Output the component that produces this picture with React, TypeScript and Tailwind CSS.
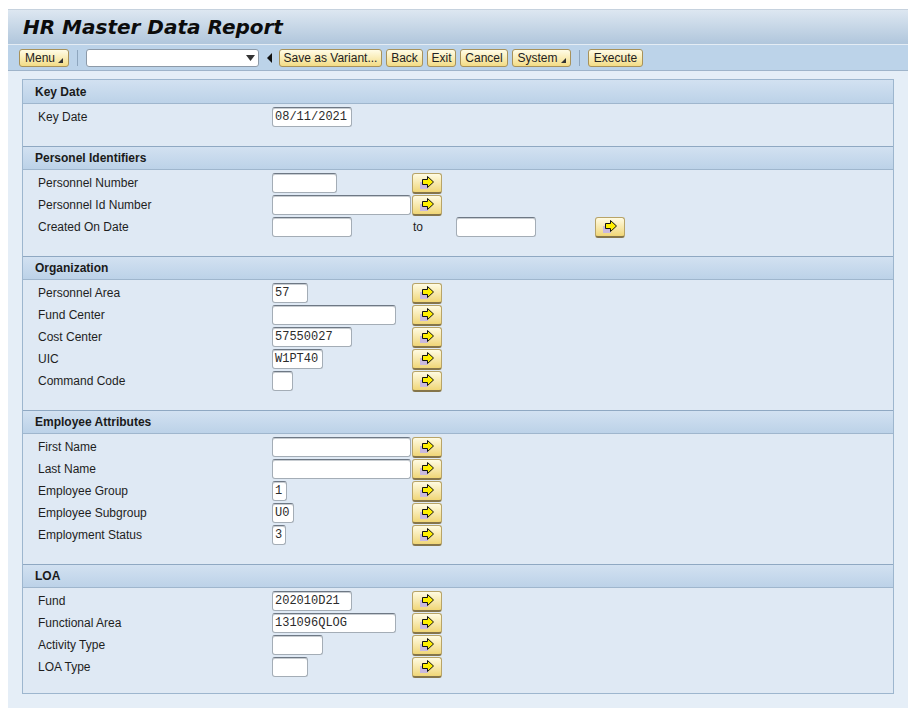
import React from "react";

type Field = {
  label: string;
  width: number;
  value?: string;
  range?: boolean;
};

type Section = {
  title: string;
  arrows: boolean;
  fields: Field[];
};

const sections: Section[] = [
  {
    title: "Key Date",
    arrows: false,
    fields: [{ label: "Key Date", width: 80, value: "08/11/2021" }],
  },
  {
    title: "Personel Identifiers",
    arrows: true,
    fields: [
      { label: "Personnel Number", width: 65 },
      { label: "Personnel Id Number", width: 139 },
      { label: "Created On Date", width: 80, range: true },
    ],
  },
  {
    title: "Organization",
    arrows: true,
    fields: [
      { label: "Personnel Area", width: 36, value: "57" },
      { label: "Fund Center", width: 124 },
      { label: "Cost Center", width: 80, value: "57550027" },
      { label: "UIC", width: 51, value: "W1PT40" },
      { label: "Command Code", width: 21 },
    ],
  },
  {
    title: "Employee Attributes",
    arrows: true,
    fields: [
      { label: "First Name", width: 139 },
      { label: "Last Name", width: 139 },
      { label: "Employee Group", width: 15, value: "1" },
      { label: "Employee Subgroup", width: 22, value: "U0" },
      { label: "Employment Status", width: 14, value: "3" },
    ],
  },
  {
    title: "LOA",
    arrows: true,
    fields: [
      { label: "Fund", width: 80, value: "202010D21" },
      { label: "Functional Area", width: 124, value: "131096QLOG" },
      { label: "Activity Type", width: 51 },
      { label: "LOA Type", width: 36 },
    ],
  },
];

function ArrowButton() {
  return (
    <div className="flex h-[21px] w-[30px] shrink-0 items-center justify-center rounded-[3px] border border-[#b8a468] border-b-[2px] border-b-[#85754a] bg-gradient-to-b from-[#fffbe2] to-[#f0d676]">
      <svg width="17" height="15" viewBox="0 0 17 15">
        <rect x="1" y="7" width="8" height="7" fill="#c9b9df" />
        <polygon
          points="3.5,4.5 8.5,4.5 8.5,1.5 14.5,7 8.5,12.5 8.5,9.5 3.5,9.5"
          fill="#ffef00"
          stroke="#111"
          strokeWidth="1"
          strokeLinejoin="miter"
        />
      </svg>
    </div>
  );
}

function TextInput({ width, value }: { width: number; value?: string }) {
  return (
    <div
      className="flex h-[20px] items-center rounded-[3px] border border-[#a4adb6] border-t-[#6e7884] bg-white pl-[2px] font-['Liberation_Mono',monospace] text-[12px] text-[#2b2b2b] shadow-[inset_0_1px_0_#c8cdd2]"
      style={{ width }}
    >
      {value}
    </div>
  );
}

function ToolButton({ label, width, menu }: { label: string; width: number; menu?: boolean }) {
  return (
    <div
      className="flex h-[18px] shrink-0 items-center justify-center gap-[3px] rounded-[3px] border border-[#a8925a] bg-gradient-to-b from-[#fffce6] to-[#f3dc84] text-[12px] leading-none text-[#222]"
      style={{ width }}
    >
      <span>{label}</span>
      {menu && (
        <svg width="5" height="5" viewBox="0 0 5 5" className="mt-[5px]">
          <polygon points="5,0 5,5 0,5" fill="#333" />
        </svg>
      )}
    </div>
  );
}

function Separator() {
  return <div className="h-[16px] w-px bg-[#8ea6be]" />;
}

export default function App() {
  return (
    <div className="min-h-[715px] w-full bg-white pl-[8px] pr-[9px] pt-[9px] font-['Liberation_Sans',Arial,sans-serif]">
      <div className="flex w-[900px] flex-col">
        <div className="flex h-[35px] items-center border-t border-[#c6d2de] bg-gradient-to-b from-[#dde7f1] to-[#b0c6dc] pl-[15px]">
          <h1 className="font-['DejaVu_Sans',Verdana,sans-serif] text-[20px] font-bold italic leading-none text-[#0c0c0c]">
            HR Master Data Report
          </h1>
        </div>
        <div className="flex h-[27px] items-center gap-[4px] border-t border-[#e4ecf4] border-b border-b-[#9fb4ca] bg-[#bcd3e9] pl-[11px]">
          <ToolButton label="Menu" width={50} menu />
          <div className="mx-[4px]">
            <Separator />
          </div>
          <div className="flex h-[18px] w-[173px] items-center justify-end rounded-[3px] border border-[#8d9aa8] bg-white pr-[3px]">
            <svg width="9" height="6" viewBox="0 0 9 6">
              <polygon points="0,0 9,0 4.5,6" fill="#333" />
            </svg>
          </div>
          <svg width="10" height="10" viewBox="0 0 10 10" className="ml-[2px]">
            <polygon points="7,0 7,10 2,5" fill="#111" />
          </svg>
          <ToolButton label="Save as Variant..." width={103} />
          <ToolButton label="Back" width={37} />
          <ToolButton label="Exit" width={29} />
          <ToolButton label="Cancel" width={48} />
          <ToolButton label="System" width={59} menu />
          <div className="mx-[4px]">
            <Separator />
          </div>
          <ToolButton label="Execute" width={55} />
        </div>
        <div className="bg-[#e5eef7] px-[14px] pb-[14px] pt-[8px]">
          <div className="border border-[#9db6ce] bg-[#dfe9f4]">
            {sections.map((section, si) => (
              <div key={section.title}>
                <div
                  className={
                    "flex h-[24px] items-center border-b border-[#9fb6cd] bg-gradient-to-b from-[#d2e1f1] to-[#bcd2e8] pl-[12px] text-[12px] font-bold text-[#1a1a1a] " +
                    (si === 0 ? "" : "border-t border-t-[#8fa8c2]")
                  }
                >
                  {section.title}
                </div>
                <div className={"pt-[2px] " + (si === sections.length - 1 ? "pb-[15px]" : "pb-[18px]")}>
                  {section.fields.map((field) => (
                    <div key={field.label} className="flex h-[22px] items-center text-[12px] text-[#1e1e1e]">
                      <div className="w-[249px] shrink-0 pl-[15px]">{field.label}</div>
                      <div className="w-[140px] shrink-0">
                        <TextInput width={field.width} value={field.value} />
                      </div>
                      {field.range ? (
                        <>
                          <div className="w-[44px] shrink-0 pl-[1px]">to</div>
                          <div className="w-[139px] shrink-0">
                            <TextInput width={80} />
                          </div>
                          <ArrowButton />
                        </>
                      ) : (
                        section.arrows && <ArrowButton />
                      )}
                    </div>
                  ))}
                </div>
              </div>
            ))}
          </div>
        </div>
      </div>
    </div>
  );
}
